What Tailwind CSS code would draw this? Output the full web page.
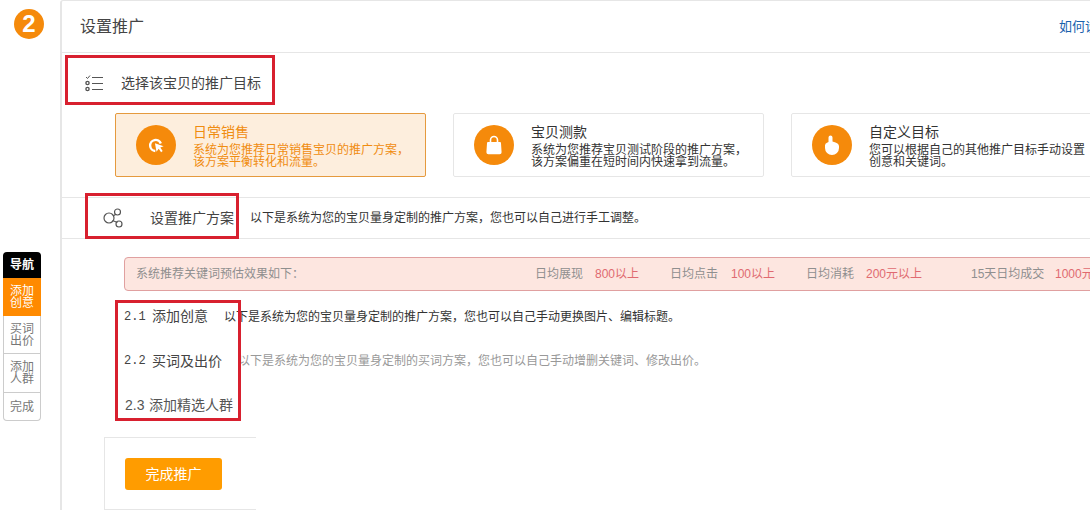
<!doctype html>
<html lang="zh-CN">
<head>
    <meta charset="utf-8"/>
    <title>设置推广</title>
    <script src="https://cdn.jsdelivr.net/npm/@tailwindcss/browser@4"></script>
</head>
<body class="relative w-[1090px] h-[510px] overflow-hidden bg-white font-['Liberation_Sans','Noto_Sans_CJK_SC',sans-serif] text-[#333]">
<div class="flex h-[510px]">
    <!-- step number and side nav -->
    <aside class="w-[60px] shrink-0 relative">
        <div class="absolute left-[14px] top-[9px] w-[30px] h-[30px] rounded-full bg-[#f58a0b] text-white font-bold text-[24px] leading-[30px] text-center">2</div>
        <nav class="absolute left-[3px] top-[252px] w-[38px] text-[12px] leading-[12px] text-center">
            <div class="h-[26px] bg-black text-white font-bold rounded-t-[4px] flex items-center justify-center">导航</div>
            <div class="h-[38px] bg-[#ff8a00] text-white flex items-center justify-center">添加<br>创意</div>
            <div class="border-x border-b border-[#ccc] text-[#777] rounded-b-[4px]">
                <div class="h-[38px] border-b border-[#ccc] flex items-center justify-center">买词<br>出价</div>
                <div class="h-[39px] border-b border-[#ccc] flex items-center justify-center">添加<br>人群</div>
                <div class="h-[27px] flex items-center justify-center">完成</div>
            </div>
        </nav>
    </aside>

    <main class="w-[1030px] h-[510px] overflow-hidden border-l-2 border-t border-[#e6e6e6] rounded-tl-[3px]">
        <header class="h-[52px] border-b border-[#e6e6e6] flex items-center justify-between pl-[19px] -ml-px">
            <h1 class="text-[16px] text-[#444] font-normal">设置推广</h1>
            <a href="#" class="text-[13px] text-[#1a62ad] w-[31px] overflow-hidden whitespace-nowrap">如何设置</a>
        </header>

        <div class="h-[60px] flex items-center pl-[22px]">
            <svg class="w-[20px] h-[18px]" viewBox="0 0 20 18" fill="none" stroke="#555">
                <path d="M2 3l1.500 1.500L6 1.500" stroke-width="1"/>
                <circle cx="3.500" cy="9" r="1.600" stroke-width="1.400"/>
                <circle cx="3.500" cy="15" r="1.600" stroke-width="1.400"/>
                <path d="M8 3.500h11M8 9.500h11M8 15.500h11" stroke-width="1"/>
            </svg>
            <h2 class="ml-[17px] text-[14px] font-normal text-[#444]">选择该宝贝的推广目标</h2>
        </div>

        <div class="flex gap-[27px] pl-[53px] w-[1200px]">
            <div class="w-[311px] h-[64px] shrink-0 rounded-[2px] border border-[#e59a3e] bg-[#fdeedd] flex items-center text-[#f08c10]">
                <div class="ml-[20px] w-[40px] h-[40px] rounded-full bg-[#f58a0b] flex items-center justify-center shrink-0">
                    <svg class="w-[19px] h-[19px]" viewBox="0 0 24 24" fill="none">
                        <path d="M17.500 9.500A7 7 0 1 0 10.500 19" stroke="#fff" stroke-width="3"/>
                        <path d="M10 10l11 4-4.200 1.600 3 4.400-2 1.400-3-4.400L12 21z" fill="#fff" transform="translate(0 -1)"/>
                    </svg>
                </div>
                <div class="ml-[17px] pb-[2px]">
                    <h3 class="text-[14px] leading-[24px] font-normal">日常销售</h3>
                    <p class="text-[12px] leading-[12px] whitespace-nowrap">系统为您推荐日常销售宝贝的推广方案，<br>该方案平衡转化和流量。</p>
                </div>
            </div>
            <div class="w-[311px] h-[64px] shrink-0 rounded-[2px] border border-[#e6e6e6] flex items-center">
                <div class="ml-[20px] w-[40px] h-[40px] rounded-full bg-[#f58a0b] flex items-center justify-center shrink-0">
                    <svg class="w-[20px] h-[22px]" viewBox="0 0 20 22" fill="#fff">
                        <path d="M6.500 9V6a3.500 3.500 0 0 1 7 0v3" fill="none" stroke="#fff" stroke-width="1.600"/>
                        <path d="M4 8h12q1 0 1 1.200l.6 9q0 2-2 2H4.400q-2 0-2-2L3 9.200Q3 8 4 8z"/>
                    </svg>
                </div>
                <div class="ml-[17px] pb-[2px]">
                    <h3 class="text-[14px] leading-[24px] font-normal">宝贝测款</h3>
                    <p class="text-[12px] leading-[12px] whitespace-nowrap">系统为您推荐宝贝测试阶段的推广方案，<br>该方案偏重在短时间内快速拿到流量。</p>
                </div>
            </div>
            <div class="w-[311px] h-[64px] shrink-0 rounded-[2px] border border-[#e6e6e6] flex items-center">
                <div class="ml-[20px] w-[40px] h-[40px] rounded-full bg-[#f58a0b] flex items-center justify-center shrink-0">
                    <svg class="w-[16px] h-[20px]" viewBox="0 0 16 20" fill="#fff">
                        <path d="M4.500 2.500a2 2 0 0 1 4 0V6.500l3 .9q3.500 1 3.500 4v1.600a7 7 0 0 1-14 0v-2.500q0-2 2-2.800l1.500-.6z"/>
                    </svg>
                </div>
                <div class="ml-[17px] pb-[2px]">
                    <h3 class="text-[14px] leading-[24px] font-normal">自定义目标</h3>
                    <p class="text-[12px] leading-[12px] whitespace-nowrap">您可以根据自己的其他推广目标手动设置<br>创意和关键词。</p>
                </div>
            </div>
        </div>

        <section class="mt-[20px] h-[42px] border-y border-[#e6e6e6] flex items-center pl-[41px]">
            <svg class="w-[22px] h-[22px] shrink-0" viewBox="0 0 22 22" fill="none" stroke="#555" stroke-width="1.200">
                <circle cx="6" cy="11" r="5"/>
                <circle cx="14.500" cy="5" r="3"/>
                <circle cx="16" cy="17" r="3"/>
                <path d="M12.500 7.500l-2.500 1.500M14.500 15.500l-5-2"/>
            </svg>
            <h2 class="ml-[25px] text-[14px] font-normal text-[#444]">设置推广方案</h2>
            <p class="ml-[16px] text-[12px]">以下是系统为您的宝贝量身定制的推广方案，您也可以自己进行手工调整。</p>
        </section>

        <div class="ml-[62px] mt-[18px] w-[1000px] h-[34px] border border-[#e0a0a0] rounded-[4px] bg-[#fde6e0] flex items-center pl-[11px] text-[12px] text-[#8f8f8f]">
            <span class="w-[399px] shrink-0">系统推荐关键词预估效果如下：</span>
            <span class="w-[60px] shrink-0">日均展现</span>
            <span class="w-[75px] shrink-0 text-[#e06a70]">800以上</span>
            <span class="w-[61px] shrink-0">日均点击</span>
            <span class="w-[75px] shrink-0 text-[#e06a70]">100以上</span>
            <span class="w-[60px] shrink-0">日均消耗</span>
            <span class="w-[105px] shrink-0 text-[#e06a70]">200元以上</span>
            <span class="w-[84px] shrink-0">15天日均成交</span>
            <span class="shrink-0 text-[#e06a70]">1000元</span>
        </div>

        <div class="ml-[62px] mt-[3px]">
            <div class="h-[45px] flex items-center">
                <span class="w-[28px] font-['Liberation_Mono',monospace] text-[12px] text-[#444]">2.1</span>
                <span class="w-[72px] text-[14px] text-[#444]">添加创意</span>
                <span class="text-[12px]">以下是系统为您的宝贝量身定制的推广方案，您也可以自己手动更换图片、编辑标题。</span>
            </div>
            <div class="h-[44px] flex items-center">
                <span class="w-[28px] font-['Liberation_Mono',monospace] text-[12px] text-[#444]">2.2</span>
                <span class="w-[86px] text-[14px] text-[#444]">买词及出价</span>
                <span class="text-[12px] text-[#999]">以下是系统为您的宝贝量身定制的买词方案，您也可以自己手动增删关键词、修改出价。</span>
            </div>
            <div class="h-[44px] flex items-center pl-px text-[14px] text-[#555]">
                <span class="w-[24px]">2.3</span>
                <span>添加精选人群</span>
            </div>
        </div>

        <div class="ml-[42px] mt-[10px] w-[152px] h-[73px] border-y border-l border-[#e6e6e6] pl-[20px] pt-[20px]">
            <button type="button" class="w-[97px] h-[32px] rounded-[3px] bg-[#ff9c00] text-white text-[14px]">完成推广</button>
        </div>
    </main>
</div>

<!-- red annotation boxes drawn over the page -->
<div class="absolute left-[65px] top-[55px] w-[210px] h-[50px] border-[3px] border-[#d8202f]"></div>
<div class="absolute left-[85px] top-[193px] w-[154px] h-[46px] border-[3px] border-[#d8202f]"></div>
<div class="absolute left-[115px] top-[300px] w-[126px] h-[121px] border-[3px] border-[#d8202f]"></div>
</body>
</html>
